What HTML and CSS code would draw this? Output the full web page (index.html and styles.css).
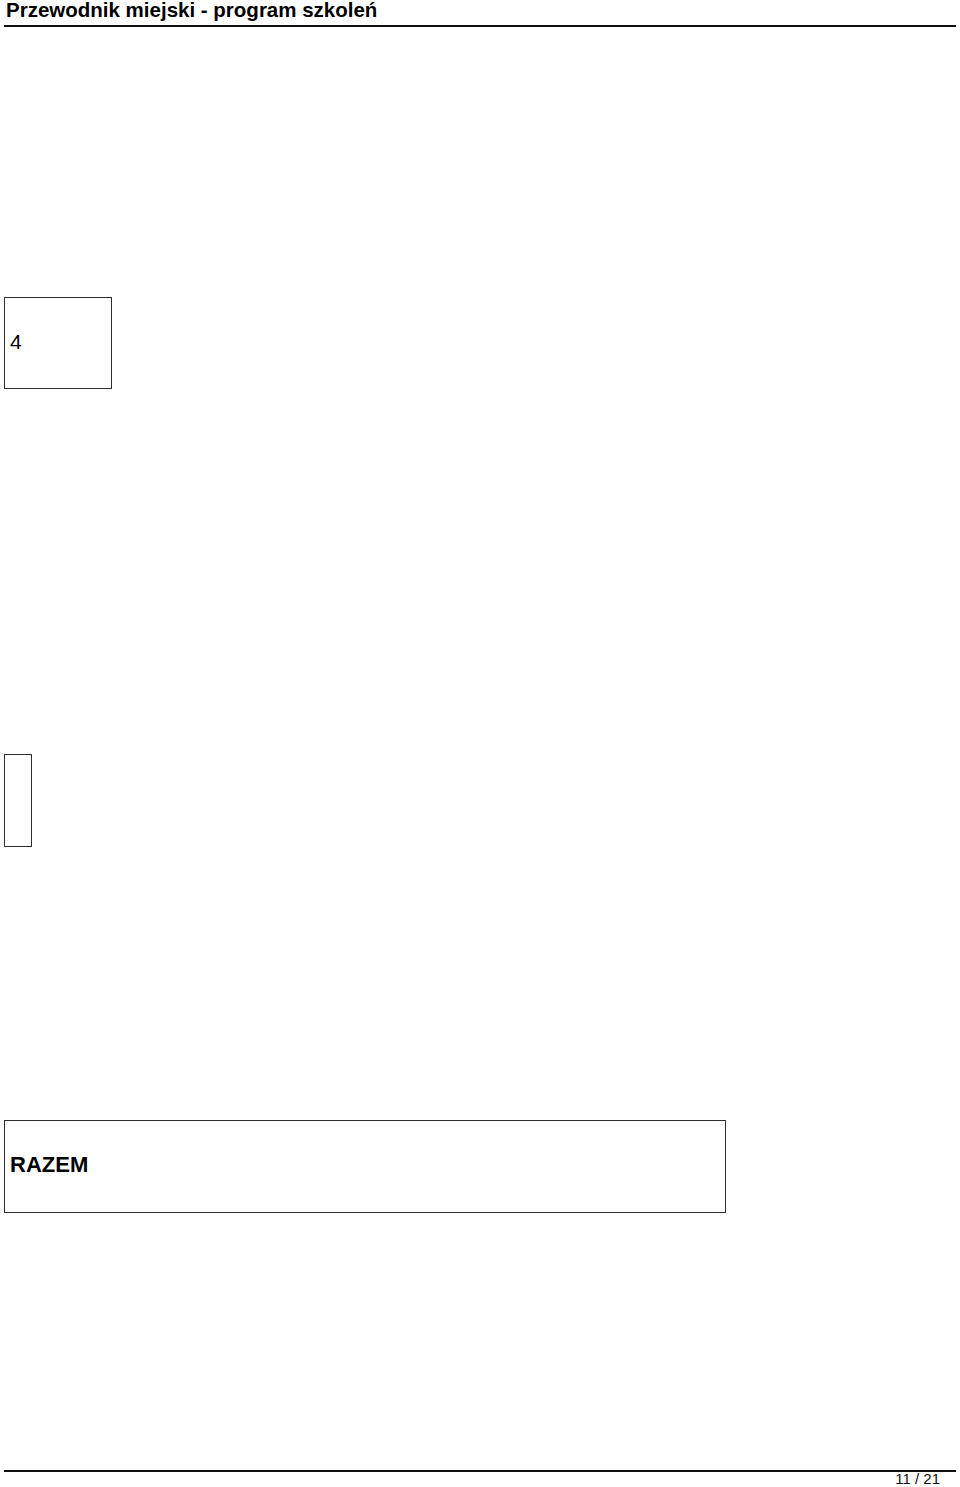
FILE: index.html
```html
<!DOCTYPE html>
<html lang="pl">
<head>
<meta charset="utf-8">
<title>Przewodnik miejski - program szkoleń</title>
<link rel="stylesheet" href="styles.css">
</head>
<body>
<div class="page">
  <header class="header">
    <h1 class="title">Przewodnik miejski - program szkoleń</h1>
  </header>
  <main class="content">
    <div class="cell cell-num">4</div>
    <div class="cell cell-narrow"></div>
    <div class="cell cell-total">RAZEM</div>
  </main>
  <footer class="footer">
    <span class="pager">11 / 21</span>
  </footer>
</div>
</body>
</html>
```
FILE: styles.css
```css
html, body {
  margin: 0;
  padding: 0;
  background: #fff;
}
body {
  font-family: "Liberation Sans", Arial, sans-serif;
  color: #000;
}
.page {
  width: 960px;
  height: 1487px;
  display: flex;
  flex-direction: column;
  overflow: hidden;
}
.header {
  margin: 0 4px;
  height: 25px;
  border-bottom: 2px solid #111;
  box-sizing: content-box;
}
.title {
  margin: 0;
  padding-left: 2px;
  font-size: 20.5px;
  font-weight: bold;
  line-height: 19px;
}
.content {
  flex: 1;
  display: flex;
  flex-direction: column;
  align-items: flex-start;
  padding-left: 4px;
}
.cell {
  box-sizing: border-box;
  height: 92px;
  border: 1px solid #2e2e2e;
  display: flex;
  align-items: center;
  padding-left: 5px;
}
.cell-num {
  margin-top: 270px;
  width: 108px;
  font-size: 21px;
  padding-bottom: 2px;
}
.cell-narrow {
  margin-top: 365px;
  width: 28px;
  height: 93px;
}
.cell-total {
  margin-top: 273px;
  width: 722px;
  height: 93px;
  font-size: 22px;
  font-weight: bold;
  padding-bottom: 3px;
}
.footer {
  margin: 0 4px;
  height: 15px;
  border-top: 2px solid #111;
  display: flex;
  justify-content: flex-end;
  align-items: flex-start;
  padding-right: 16px;
}
.pager {
  font-size: 15px;
  line-height: 14px;
  margin-top: 0;
  color: #111;
}
```
